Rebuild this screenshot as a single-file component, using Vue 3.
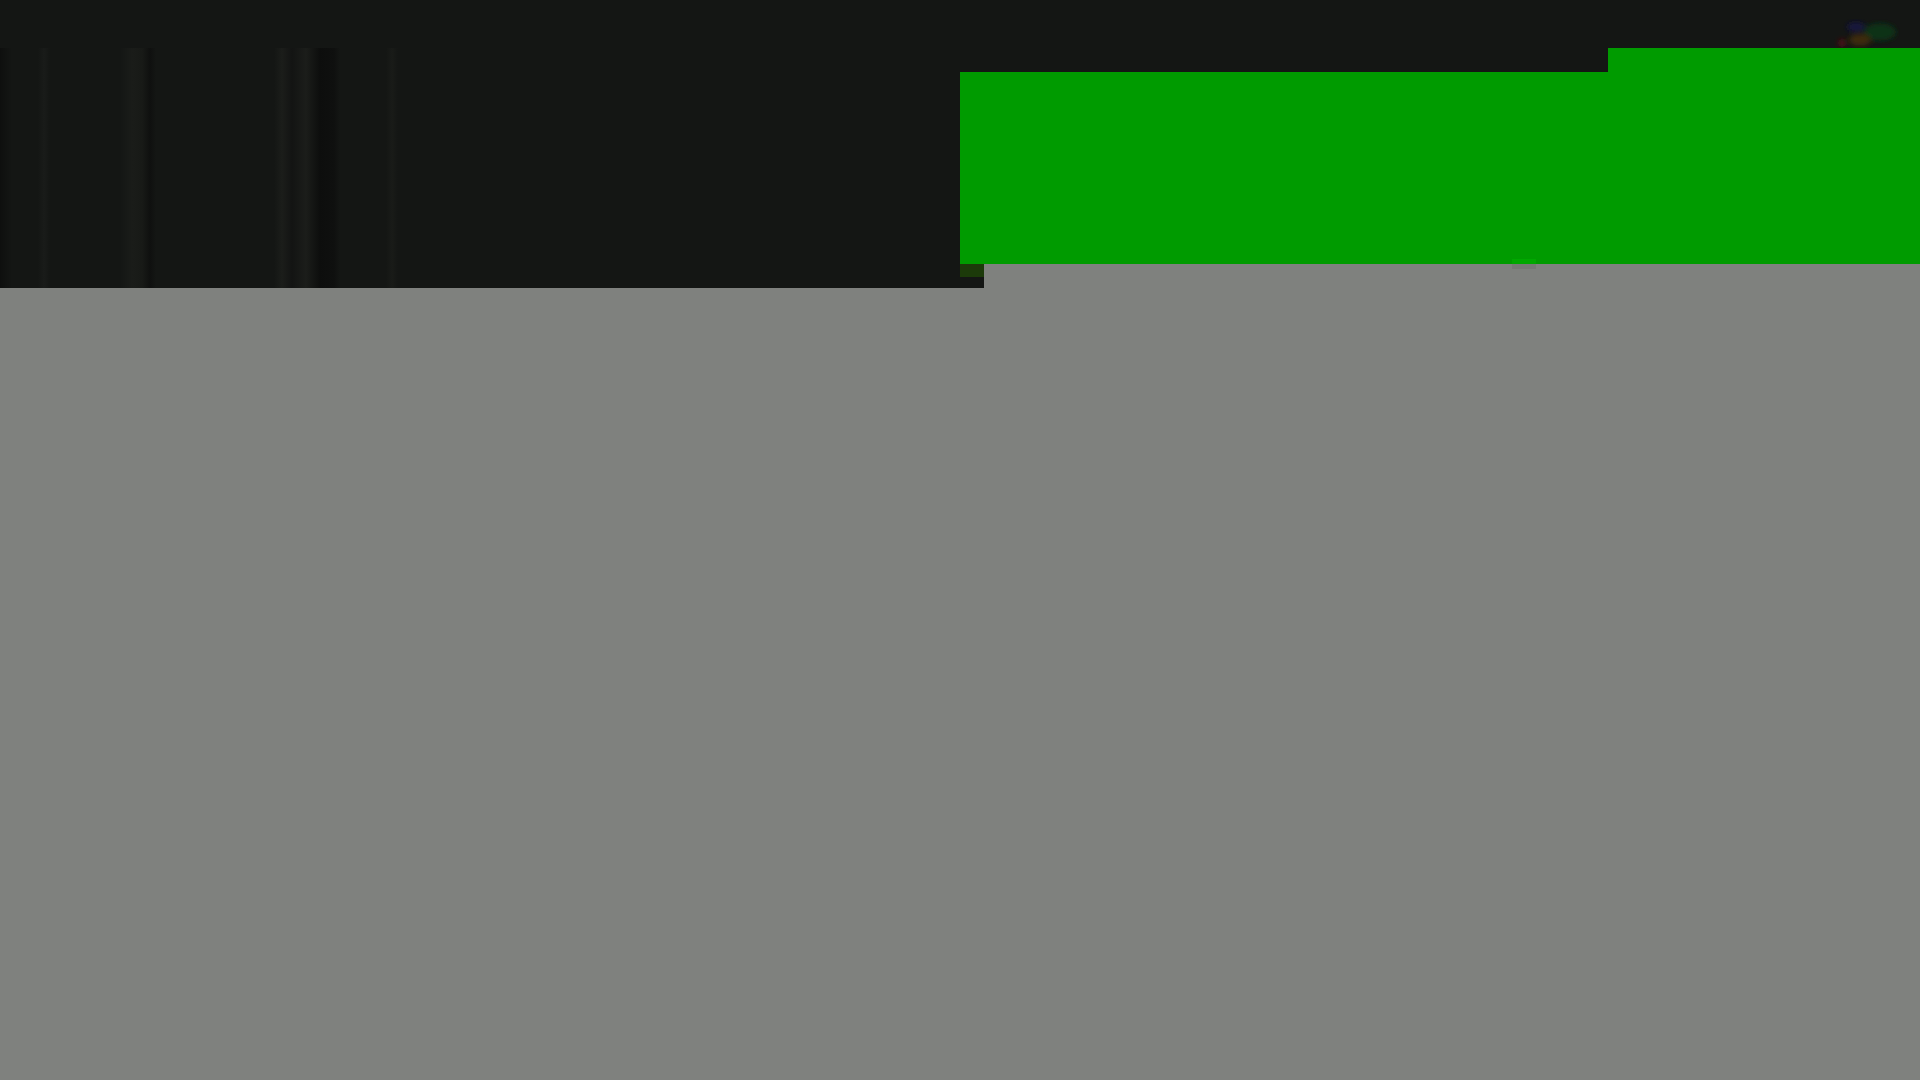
<template>
  <div class="page">
    <header class="top">
      <div class="top-left"></div>
      <div class="top-right">
        <div class="tab"></div>
        <div class="panel">
          <span class="panel-bump"></span>
        </div>
        <div class="under-panel">
          <div class="notch">
            <div class="notch-green"></div>
          </div>
          <div class="under-fill">
            <span class="under-shadow"></span>
          </div>
        </div>
      </div>
      <svg class="corner-mark" width="72" height="30" viewBox="0 0 72 30">
        <defs>
          <filter id="soft">
            <feGaussianBlur stdDeviation="2.5" />
          </filter>
        </defs>
        <g filter="url(#soft)">
          <ellipse cx="46" cy="14" rx="16" ry="9" fill="#0a3018" />
          <ellipse cx="22" cy="9" rx="9" ry="5" fill="#12123c" />
          <ellipse cx="26" cy="22" rx="11" ry="6" fill="#3c2a08" />
          <ellipse cx="8" cy="25" rx="4" ry="4" fill="#4c0e12" />
        </g>
      </svg>
    </header>
    <main class="content"></main>
  </div>
</template>

<script setup>
</script>

<style>
body {
  background: #7f817e;
}
</style>

<style scoped>
.page {
  display: flex;
  flex-direction: column;
  width: 1920px;
  height: 1080px;
  overflow: hidden;
  background: #7f817e;
}

.top {
  position: relative;
  display: flex;
  height: 288px;
  background: #141614;
}

.top-left {
  width: 960px;
  margin-top: 48px;
  background:
    linear-gradient(90deg,
      #0e0f0e 0, #141614 12px,
      #141614 38px, #191b19 44px, #141614 50px,
      #141614 120px, #1a1c19 132px, #181a17 142px, #0f100f 150px, #141614 156px,
      #141614 274px, #1b1d1a 282px, #131413 292px, #1b1d1a 306px, #0d0e0d 320px, #0f100f 334px, #141614 340px,
      #141614 386px, #191b18 392px, #141614 398px,
      #141614 100%);
}

.top-right {
  flex: 1;
  display: flex;
  flex-direction: column;
  padding-top: 48px;
}

.tab {
  align-self: flex-end;
  width: 312px;
  height: 24px;
  background: #009b00;
}

.panel {
  display: flex;
  align-items: flex-end;
  height: 192px;
  padding-left: 552px;
  background: #009b00;
}

.panel-bump {
  width: 24px;
  height: 5px;
  background: #00a800;
}

.under-panel {
  flex: 1;
  display: flex;
}

.notch {
  width: 24px;
  background: #141614;
}

.notch-green {
  height: 13px;
  background: #1c3a0a;
}

.under-fill {
  flex: 1;
  padding-left: 528px;
  background: #7f817e;
}

.under-shadow {
  display: block;
  width: 24px;
  height: 5px;
  background: #767875;
}

.corner-mark {
  position: absolute;
  top: 18px;
  right: 14px;
}

.content {
  flex: 1;
  background: #7f817e;
}
</style>
